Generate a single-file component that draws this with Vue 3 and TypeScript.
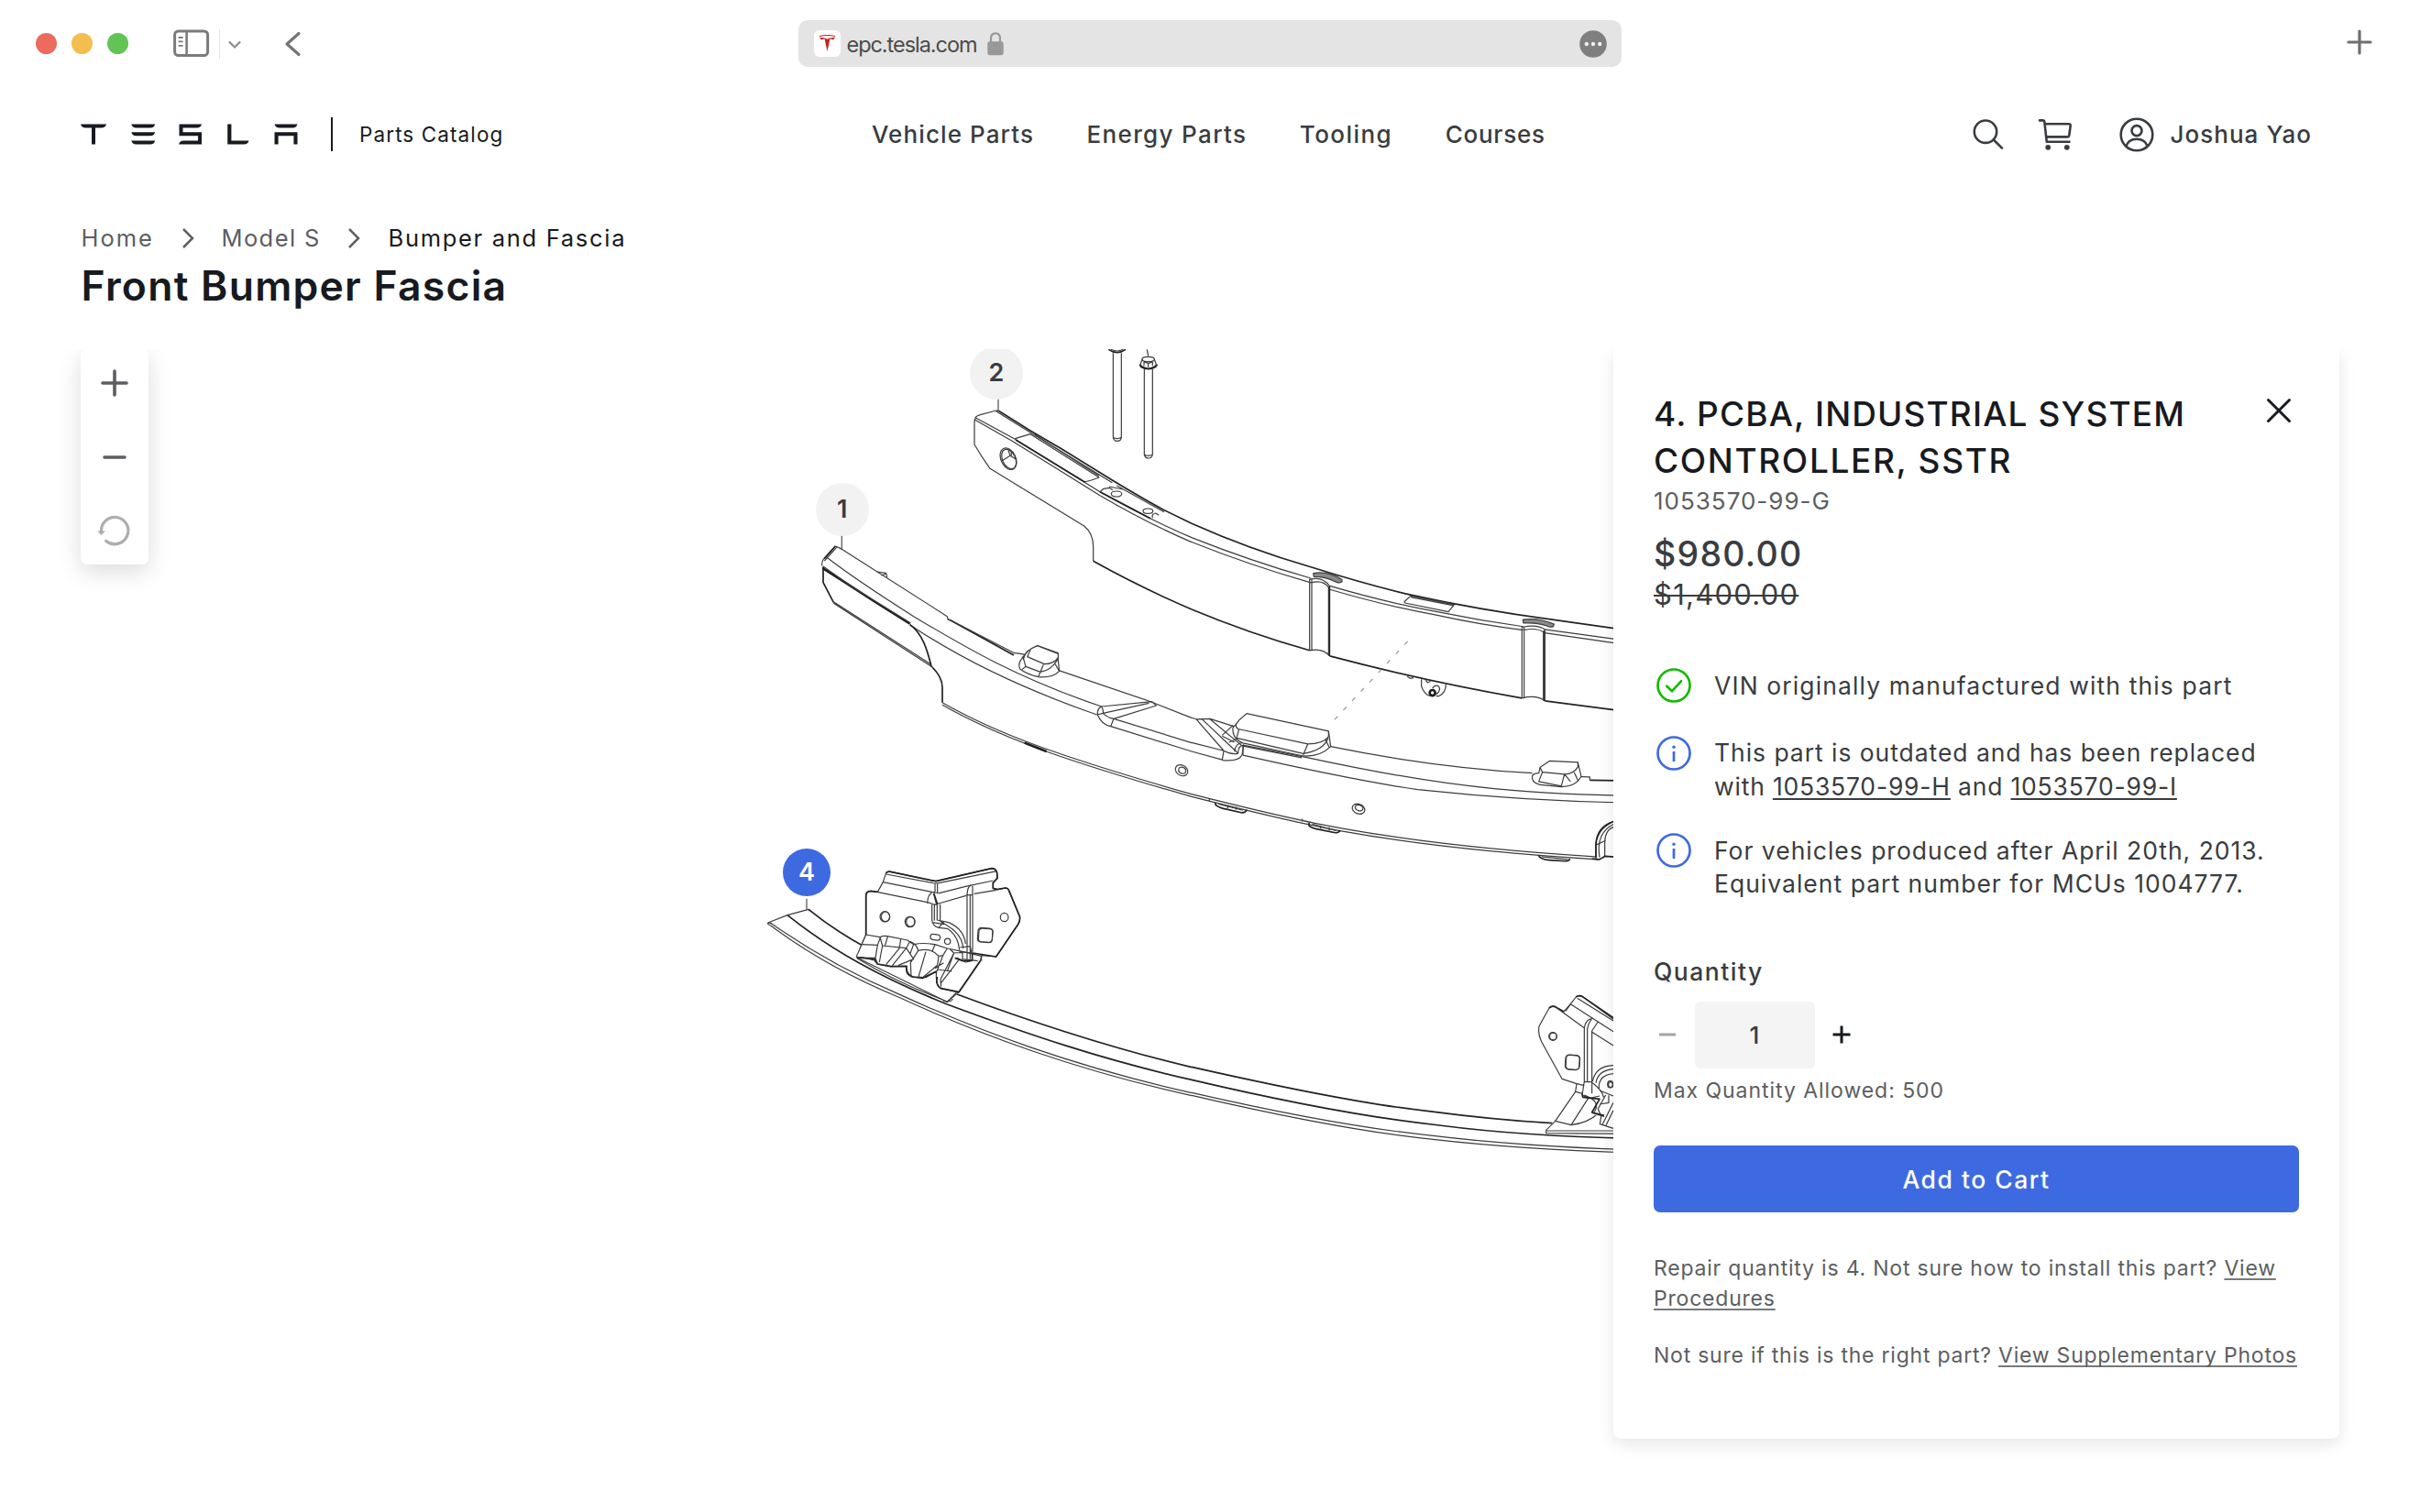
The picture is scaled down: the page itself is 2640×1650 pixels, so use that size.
<script setup lang="ts">
import { ref } from 'vue'

interface NavItem { label: string; tracking: string }
interface Pin { id: number; x: number; y: number }

const nav: NavItem[] = [
  { label: 'Vehicle Parts', tracking: '1.1px' },
  { label: 'Energy Parts', tracking: '1.35px' },
  { label: 'Tooling', tracking: '1.45px' },
  { label: 'Courses', tracking: '0.75px' },
]

// Pin centres on the diagram canvas, in canvas pixels.
const pins: Pin[] = [
  { id: 2, x: 1087, y: 26 },
  { id: 1, x: 918.7, y: 175 },
  { id: 4, x: 880, y: 570.7 },
]
const activePin = ref(4)
const quantity = ref(1)
</script>

<template>
  <div class="page">
    <div class="browser">
      <div class="lights"><i class="red"></i><i class="amber"></i><i class="green"></i></div>
      <svg class="sidebar" width="40" height="32" viewBox="0 0 40 32" fill="none" stroke="#7b7b7b">
        <rect x="1.6" y="2" width="36" height="26.6" rx="4" stroke-width="3" />
        <path d="M14.6 2V28.6" stroke-width="2.6" />
        <path d="M5.6 9H10.6M5.6 13.4H10.6M5.6 17.8H10.6" stroke-width="1.8" />
      </svg>
      <span class="rule"></span>
      <svg class="down" width="14" height="10" viewBox="0 0 14 10" fill="none" stroke="#8c8c8c" stroke-width="2.2" stroke-linecap="round" stroke-linejoin="round"><path d="M1.5 2L7 7.5L12.5 2" /></svg>
      <svg class="back" width="20" height="28" viewBox="0 0 20 28" fill="none" stroke="#757575" stroke-width="3.2" stroke-linecap="round" stroke-linejoin="round"><path d="M16 2.5L3 14L16 25.5" /></svg>
      <div class="address">
        <span class="favicon">
          <svg width="29" height="29" viewBox="0 0 29 29" fill="#c4231f">
            <path d="M14.5 23L11.6 9.6C10.2 9.7 9.2 10 8.6 10.5C7.5 10.1 6.5 8.9 6 7.6C8.4 8.3 11.8 8 14.5 9.8C17.2 8 20.6 8.3 23 7.6C22.5 8.9 21.5 10.1 20.4 10.5C19.8 10 18.8 9.7 17.4 9.6Z" />
            <path d="M5.6 6.3C10.5 4.4 18.5 4.4 23.4 6.3L23 7.1C18 5.6 11 5.6 6 7.1Z" />
          </svg>
        </span>
        <span class="url">epc.tesla.com</span>
        <svg class="lock" width="18" height="26" viewBox="0 0 18 26">
          <path d="M4 11V7Q4 1.4 9 1.4Q14 1.4 14 7V11" fill="none" stroke="#989898" stroke-width="2.2" />
          <rect x="0.3" y="10.3" width="17.4" height="15" rx="2.5" fill="#989898" />
        </svg>
        <svg class="dots" width="30" height="30" viewBox="0 0 30 30"><circle cx="15" cy="15" r="14.8" fill="#7f7f7f" /><g fill="#efefef"><circle cx="7.8" cy="15" r="2.2" /><circle cx="15" cy="15" r="2.2" /><circle cx="22.2" cy="15" r="2.2" /></g></svg>
      </div>
      <svg class="newtab" width="28" height="28" viewBox="0 0 28 28" stroke="#6e6e6e" stroke-width="3.2" stroke-linecap="round"><path d="M14 2V26M2 14H26" /></svg>
    </div>

    <header class="header">
      <div class="brand">
        <svg width="237" height="24" viewBox="0 0 237 24" fill="#171a20">
          <path d="M0 0.5H28Q27 4.5 22.5 4.5H16V22.5H12V4.5H5.5Q1 4.5 0 0.5Z" />
          <path d="M55.3 0.5H81.2Q80.2 4.5 76 4.5H60.5Q56.3 4.5 55.3 0.5ZM55.3 9.2H81.2Q80.2 13.2 76 13.2H60.5Q56.3 13.2 55.3 9.2ZM55.3 18.5H81.2Q80.2 22.5 76 22.5H60.5Q56.3 22.5 55.3 18.5Z" />
          <path d="M107.5 0.5H132Q131 4.5 126.5 4.5H111.5V9.2H132V22.5H107Q108 18.5 112.5 18.5H128V13.2H107.5Z" />
          <path d="M160.2 0.5H164.4V18.5H183.5Q182.5 22.5 178 22.5H160.2Z" />
          <path d="M211.5 0.5H236.5Q235.5 4.5 231 4.5H217Q212.5 4.5 211.5 0.5ZM211.5 9.2H236.5V22.5H232.4V13.2H215.6V22.5H211.5Z" />
        </svg>
        <span class="bar"></span>
        <span class="catalog">Parts Catalog</span>
      </div>
      <nav class="nav">
        <a v-for="n in nav" :key="n.label" :style="{ letterSpacing: n.tracking }">{{ n.label }}</a>
      </nav>
      <div class="tools">
        <svg class="search" width="34" height="34" viewBox="0 0 34 34" fill="none" stroke="#393c41" stroke-width="2.6" stroke-linecap="round"><circle cx="14" cy="13.7" r="12.2" /><path d="M22.8 22.5L32 31.7" /></svg>
        <svg class="cart" width="38" height="36" viewBox="0 0 38 36" fill="none" stroke="#393c41" stroke-width="2.6" stroke-linecap="round" stroke-linejoin="round">
          <path d="M2 2.4H5.2Q7.2 2.4 7.4 4.5L9.8 25.8H34.5M7.9 6.2H34Q35.9 6.2 35.7 8.3L34.3 18.6Q34 20.4 32.2 20.4H9.4" />
          <circle cx="11.2" cy="31.8" r="2.9" fill="#393c41" stroke="none" /><circle cx="31.8" cy="31.8" r="2.9" fill="#393c41" stroke="none" />
        </svg>
        <svg class="user" width="38" height="38" viewBox="0 0 38 38" fill="none" stroke="#393c41" stroke-width="2.6"><circle cx="19" cy="19" r="17.3" /><circle cx="19" cy="14.6" r="5.5" /><path d="M7.6 31.4C9 26.6 13.5 23.7 19 23.7C24.5 23.7 29 26.6 30.4 31.4" /></svg>
        <span class="name">Joshua Yao</span>
      </div>
    </header>

    <div class="crumbs">
      <span class="home">Home</span>
      <svg width="14" height="24" viewBox="0 0 14 24"><path d="M2 2L12 12L2 22" /></svg>
      <span class="model">Model S</span>
      <svg width="14" height="24" viewBox="0 0 14 24"><path d="M2 2L12 12L2 22" /></svg>
      <span class="current">Bumper and Fascia</span>
    </div>
    <h1 class="title">Front Bumper Fascia</h1>

    <main class="stage">
      <svg class="diagram" width="960" height="900" viewBox="820 381 960 900" fill="none">
        <!-- left half: parts 1 and 2, fixing bolts -->
        <g class="ink" transform="translate(820 370) scale(.33333)">
          <path d="M807 187V236M295 632V690" class="soft" />
          <path class="bold" d="M808 235L912 300L1010 357L1185 465Q1290 528 1350 560L1440 604" />
          <path d="M732 257Q738 250 748 248L800 234L808 235M800 236L912 306L1180 470" />
          <path d="M732 257L862 328L1140 500Q1300 590 1440 650M730 264L855 335L1140 512Q1290 600 1440 665" />
          <path d="M862 326L912 311L1137 453L1112 462L1088 468M925 312L1137 448" />
          <path class="bold" d="M864 330L1090 468M1140 500L1305 587" />
          <path d="M734 255L729 268V345Q752 385 780 424L1088 612Q1118 636 1118 680V727" />
          <path class="bold" d="M1118 727Q1270 812 1440 885" />
          <ellipse cx="840" cy="392" rx="24" ry="37" transform="rotate(-25 840 392)" />
          <ellipse cx="842" cy="393" rx="21" ry="34" transform="rotate(-25 842 393)" />
          <path d="M840 364L846 382L820 398M846 382L866 394M850 366V382" />
          <path d="M1140 500L1152 490L1170 487L1182 494M1170 483L1215 492" />
          <ellipse cx="1194" cy="507" rx="17" ry="9" /><ellipse cx="1297" cy="563" rx="16" ry="8" />
          <path d="M1312 586Q1308 572 1322 570L1333 577M1195 480L1350 566" />
          <path class="bold" d="M1168 34Q1196 54 1224 34" />
          <path d="M1176 34Q1196 44 1216 34M1183 46V322Q1186 334 1196 334Q1208 334 1210 322V46M1183 322Q1196 330 1210 322" />
          <path d="M1294 34L1298 56M1278 66L1272 84M1318 66L1324 84M1284 74L1298 80L1312 74M1298 80V92M1284 74V88M1312 74V88" />
          <ellipse cx="1298" cy="66" rx="20" ry="8" />
          <path class="bold" d="M1269 84Q1298 110 1328 84M1272 90Q1298 106 1324 90" />
          <path d="M1285 98V378Q1288 390 1298 390Q1310 390 1312 378V98M1285 378Q1298 386 1312 378" />

          <path d="M274 678L290 685L640 908L642 918L652 922M274 678L234 722Q229 732 230 742M280 680L238 726" />
          <path class="bold" d="M274 678L238 718M650 920L858 1035M234 745V797L268 862" />
          <path d="M268 860L588 1066M268 865L588 1072M642 916L860 1028L880 1030L905 1036" />
          <path d="M242 712C330 780 400 826 530 908C700 1010 870 1110 1145 1203" />
          <path d="M518 935L540 950C700 1055 900 1150 1130 1230" />
          <path class="heavy" d="M232 750L292 788L400 858L518 932" />
          <path d="M234 744L330 812L520 930" />
          <path class="bold" d="M518 935C560 965 575 1020 588 1071Q624 1105 624 1140V1190" />
          <path d="M624 1190C800 1290 1000 1365 1440 1490M624 1198C800 1298 1000 1373 1440 1498" />
          <path d="M410 762L440 766L443 780M424 774L440 768" />
          <path d="M1005 1085L1300 1185L1440 1240" />
          <path class="heavy" d="M893 1322L965 1350" />
          <g fill="#fff">
            <path d="M878 1080Q870 1062 885 1045L905 1020L935 1004L1003 1028V1052L1007 1087Q985 1110 938 1106Q900 1097 878 1080Z" />
            <path d="M935 1004L1003 1030V1042Q990 1064 958 1064L902 1040L914 1014Z" />
          </g>
          <path d="M905 1020Q892 1032 890 1048L897 1072L945 1090Q980 1085 1000 1050M945 1090L938 1106M945 1090L955 1066M1003 1048L992 1062L1007 1087M897 1072L885 1082M890 1048L885 1040" />
          <path d="M1145 1203L1310 1187L1324 1200L1185 1243Q1165 1240 1150 1225L1300 1192M1145 1203Q1130 1210 1132 1230Q1145 1262 1175 1268L1440 1350M1145 1203Q1152 1215 1150 1225L1130 1230M1185 1243L1175 1268M1185 1243L1440 1322" />
        </g>

        <!-- middle: beams up to the details panel -->
        <g class="ink" transform="translate(1280 370) scale(.33333 .38265)">
          <path class="bold" d="M60 526Q250 600 450 650Q640 702 780 730Q1000 772 1240 800L1500 832" />
          <path d="M60 566Q250 632 450 682M60 579Q250 645 450 695M512 704Q700 752 860 777Q1000 802 1145 820M512 714Q700 762 860 787Q1000 814 1145 830M1215 828L1500 862M1215 838L1500 874" />
          <path d="M446 685V888M453 685V888M508 705V900M446 685Q490 676 512 705M450 695Q490 686 508 708M446 888Q490 880 512 904M1141 822V1024M1148 822V1024M1211 832V1032M1141 822Q1190 812 1216 828M1146 830Q1190 822 1211 836M1141 1024Q1190 1014 1216 1032" />
          <path class="bold" d="M511 705V904M1215 830V1032M60 771Q250 840 446 888M512 904Q820 975 1141 1024M1216 1032L1500 1064" />
          <path fill="#8a8a8a" d="M458 668Q505 660 552 686V692Q542 698 530 692Q498 678 460 678ZM1144 800Q1196 794 1246 813L1244 819Q1234 824 1222 818Q1190 808 1146 810Z" />
          <path d="M755 750L777 732L920 757L900 778L755 752M777 736L918 760" />
          <path class="dash" d="M767 862L510 1102" />
          <path d="M812 970V990Q820 1012 840 1018M860 1018H870Q892 1008 892 985M848 996Q856 984 868 990Q878 1000 860 1014M826 972L832 980L842 976M765 962L776 968L786 966" />
          <ellipse class="heavy" cx="848" cy="1009" rx="9" ry="8" />

          <path d="M60 1080L75 1084L120 1083L200 1105M75 1084L165 1174M95 1085L210 1180M120 1084L222 1158M60 1151L165 1174M60 1176L160 1200M165 1174L160 1201M165 1174Q190 1186 212 1182M160 1201Q215 1206 225 1186L230 1158Q212 1158 212 1182M228 1152Q205 1150 200 1176" />
          <path d="M160 1130L195 1102M182 1150L216 1138M160 1132L200 1150" />
          <path fill="#fff" d="M204 1100L214 1088L240 1068L508 1118L515 1162Q480 1192 425 1189L228 1152Q192 1140 195 1108Z" />
          <path d="M508 1118V1134Q490 1155 440 1155L212 1112Q202 1106 206 1096M215 1112L207 1138L425 1182Q490 1174 507 1138M440 1155L425 1186M497 1140L510 1164M224 1160L420 1194" />
          <path d="M515 1162Q850 1222 1175 1238M228 1158L430 1192Q800 1262 1050 1282T1500 1301M228 1187Q600 1260 800 1285Q1150 1318 1500 1323M228 1158V1187" />
          <path fill="#fff" d="M1200 1222L1232 1203L1324 1207L1335 1248Q1315 1278 1270 1277L1200 1271Q1170 1265 1175 1245Q1182 1238 1196 1238Z" />
          <path d="M1324 1207V1220Q1310 1241 1280 1241L1208 1235L1200 1222M1208 1235L1196 1262L1270 1275M1280 1241L1270 1275M1280 1241L1300 1262M1312 1236L1325 1260M1335 1248L1363 1249V1258" />
          <path class="bold" d="M1363 1258L1500 1260" />
          <ellipse cx="27" cy="1230" rx="21" ry="15" transform="rotate(20 27 1230)" /><ellipse cx="29" cy="1230" rx="12" ry="9" transform="rotate(20 29 1230)" />
          <ellipse cx="606" cy="1340" rx="21" ry="14" transform="rotate(15 606 1340)" /><ellipse cx="608" cy="1337" rx="13" ry="8" transform="rotate(15 608 1337)" />
          <path d="M60 1298Q400 1373 550 1395Q900 1450 1380 1476M60 1305Q400 1380 550 1403Q900 1458 1390 1484M118 1310V1318M422 1368V1376" />
          <path class="bold" d="M138 1322V1328Q150 1338 175 1341L225 1351Q238 1350 240 1342M444 1379V1388Q455 1396 480 1399L530 1408Q542 1408 546 1401M1195 1472Q1200 1484 1230 1486L1285 1489Q1295 1488 1298 1482" />
          <path d="M148 1326L228 1344M178 1330V1338M205 1334V1342M455 1383L532 1402M482 1388V1396M510 1392V1402M1205 1476L1290 1484" />
          <path d="M1383 1480V1440Q1385 1390 1440 1376M1395 1478Q1382 1410 1440 1384M1412 1475V1440Q1412 1400 1440 1392M1383 1443L1415 1430" />
          <path class="bold" d="M1383 1480V1440Q1388 1395 1440 1376M1370 1482L1395 1484L1412 1475L1500 1480" />
        </g>

        <!-- lower left: part 4 strip -->
        <g class="ink" transform="translate(820 780) scale(.33333)">
          <path d="M180 602V636" class="soft" />
          <path d="M53 681L117 656L186 637L192 642M53 681Q51 686 62 690M53 681L66 684" />
          <path class="bold" d="M186 637Q270 705 362 755M672 915C900 1000 1150 1085 1440 1154" />
          <path class="bold" d="M117 656C260 770 420 860 640 948C900 1045 1150 1130 1440 1195" />
          <path d="M345 797Q480 880 640 938" />
          <path d="M60 680C180 765 330 850 480 914C750 1038 1050 1150 1440 1238M62 690C180 778 330 862 480 924C750 1048 1050 1160 1440 1247" />

          <path fill="#fff" d="M374 720V592Q374 578 390 577L412 580L430 548L440 518Q445 512 455 514L603 545L785 503Q800 503 803 518L804 535L790 550V568L804 572L830 567Q840 567 843 578L877 660Q880 672 872 686L800 792L752 788L748 806L678 908L640 940L345 795L360 752Z" />
          <path fill="#fff" d="M345 795Q342 788 348 780L374 720L420 728Q430 722 445 725L510 738L530 752Q560 745 600 752L640 765L690 775L752 790L748 806L678 908L620 896Q600 885 605 840L570 860L530 858Q505 850 507 822L455 824L412 816L402 804L362 794Z" />
          <path class="bold" d="M374 720V592Q374 578 390 577L412 580M440 518Q445 512 455 514L603 545L785 503Q800 503 803 518L804 535L790 550V568L804 572L830 567Q840 567 843 578L877 660Q880 672 872 686L800 792L724 780" />
          <path class="bold" d="M748 806L678 908L620 896Q600 885 608 858M345 795L402 800L412 816L455 824L507 824Q503 850 525 858L560 862L605 840" />
          <path d="M440 522L600 552L612 551L802 512M430 548L590 580L614 584L700 562L790 543M410 580L575 614L600 622L612 618L702 592M728 586L800 574M600 552V582M608 552V582" />
          <path d="M590 622V672Q592 692 612 697L640 700Q676 722 680 770M598 622V674M607 622V672L645 680Q695 702 700 750M617 620V676L640 690Q690 720 692 765M575 617Q576 590 590 582M605 622L596 586M592 680L630 686M612 697L630 676" />
          <path class="bold" d="M596 584L608 620" />
          <path d="M705 592V800M715 592V800M723 585V780M705 592Q705 565 717 557M723 588V560M702 590H722" />
          <ellipse cx="436" cy="661" rx="16" ry="17" /><ellipse cx="518" cy="678" rx="16" ry="17" /><ellipse cx="827" cy="663" rx="13" ry="14" />
          <ellipse cx="438" cy="661" rx="14" ry="16" /><ellipse cx="520" cy="678" rx="14" ry="16" />
          <rect x="740" y="698" width="48" height="47" rx="11" transform="rotate(4 764 722)" /><rect x="743" y="700" width="45" height="44" rx="10" transform="rotate(4 764 722)" />
          <rect x="585" y="719" width="32" height="18" rx="8" transform="rotate(8 600 728)" /><circle cx="641" cy="742" r="9.5" />
          <path d="M360 752L412 754M348 795L405 796M412 754L420 732M412 754L405 796L412 816M428 756L506 764M428 756L418 810M420 728L428 756M445 726L436 758M488 734L484 762M506 764L518 742M506 764L460 822M484 764L440 818M506 764L530 800L480 820M518 742Q540 750 545 772M530 752L518 784M545 772L520 812L522 856M545 772Q590 762 612 790M570 776L546 858M600 752L590 776M612 790L608 820L562 858M640 765L626 788L612 790M626 788L606 840M650 768L662 780L640 840M662 780L690 778M662 780L618 866L620 890M680 800L618 880M655 840L608 834M628 812L600 830M690 774V800L740 806M672 796L700 810L720 806M682 762L715 758L720 780L680 776" />
          <path class="bold" d="M665 796L692 806L722 804V780" />
          <path d="M672 907L640 940L626 936M636 940L654 936L658 930M752 788V806" />
        </g>

        <!-- lower right: strip end and second bracket -->
        <g class="ink" transform="translate(1280 960) scale(.33333)">
          <path class="bold" d="M60 613C400 690 650 738 830 757Q1050 786 1240 797M60 655C400 735 650 780 870 804Q1150 840 1500 847" />
          <path d="M60 697C400 775 650 818 850 838Q1130 872 1500 884M60 706C400 785 650 830 850 850Q1130 882 1500 894" />
          <path fill="#fff" d="M1320 668L1272 652L1205 530Q1192 505 1197 480L1230 420Q1238 412 1250 416L1278 432L1300 407L1318 384Q1325 377 1338 382L1500 500V832L1220 830V820L1250 790L1316 694Z" />
          <path class="bold" d="M1318 384Q1325 377 1338 382L1440 452M1230 420Q1238 412 1250 416L1278 432" />
          <path d="M1322 388L1440 462M1250 416L1345 485M1345 485V660M1355 490V660M1370 495V662M1300 407L1440 497M1368 497L1440 543M1345 485Q1350 455 1372 455M1355 490Q1358 470 1368 458M1370 495L1390 465M1284 430L1300 407" />
          <circle cx="1242" cy="513" r="13" /><circle cx="1243" cy="513" r="11.5" />
          <rect x="1283" y="574" width="47" height="48" rx="12" transform="rotate(4 1306 598)" /><rect x="1285" y="575" width="44" height="46" rx="11" transform="rotate(4 1306 598)" />
          <ellipse cx="1430" cy="670" rx="9" ry="11" /><ellipse cx="1431" cy="671" rx="7" ry="9" />
          <path d="M1372 660Q1382 610 1440 608M1383 665Q1390 624 1440 620M1393 684Q1390 640 1440 635" />
          <path d="M1316 694L1340 700M1250 790L1302 803L1360 712L1345 705M1302 803Q1360 795 1390 765M1345 660L1338 705L1360 716L1395 708M1345 662H1370V700M1372 665Q1405 690 1408 712M1395 690L1440 708M1415 705L1390 750L1400 775L1396 800L1440 814M1440 730L1405 800M1360 712Q1400 730 1375 765L1410 775M1425 706V730L1395 735M1320 668L1345 674M1440 755L1415 806M1222 822H1440" />
          <path class="bold" d="M1338 700L1340 712L1395 718L1370 762L1410 772" />
        </g>
      </svg>

      <button v-for="p in pins" :key="p.id" class="pin" :class="{ active: p.id === activePin }" :style="{ left: p.x + 'px', top: p.y + 'px' }">{{ p.id }}</button>

      <div class="zoom">
        <svg width="32" height="32" viewBox="0 0 32 32" stroke="#5c5e62" stroke-width="3.6" stroke-linecap="round"><path d="M16 3V29M3 16H29" /></svg>
        <svg width="32" height="32" viewBox="0 0 32 32" stroke="#5c5e62" stroke-width="3.6" stroke-linecap="round"><path d="M5 16H27" /></svg>
        <svg width="40" height="36" viewBox="0 0 40 36" fill="none" stroke="#adadad" stroke-width="3.2"><path d="M10.6 29.2A14.7 14.7 0 1 0 5.6 20" stroke-linecap="round" /><path d="M1 18.5H10L5.500 23Z" fill="#adadad" stroke="none" /></svg>
      </div>

      <aside class="panel">
        <div class="head">
          <h2><span class="l1">4. PCBA, INDUSTRIAL SYSTEM</span><br /><span class="l2">CONTROLLER, SSTR</span></h2>
          <svg width="28" height="28" viewBox="0 0 28 28" stroke="#171a20" stroke-width="3" stroke-linecap="round"><path d="M2.5 2.5L25.5 25.5M25.5 2.5L2.5 25.5" /></svg>
        </div>
        <div class="sku">1053570-99-G</div>
        <div class="price">$980.00</div>
        <div class="was">$1,400.00</div>

        <div class="note n1">
          <svg width="40" height="40" viewBox="0 0 40 40" fill="none" stroke="#12bb00" stroke-width="2.7" stroke-linecap="round" stroke-linejoin="round"><circle cx="20" cy="20" r="17.5" /><path d="M12.3 20.8L18 26.2L28 15.3" /></svg>
          <p class="v">VIN originally manufactured with this part</p>
        </div>
        <div class="note n2">
          <svg width="40" height="40" viewBox="0 0 40 40" fill="none" stroke="#3e6ae1" stroke-width="2.7"><circle cx="20" cy="20" r="17.5" /><path d="M20 18V29" /><circle cx="20" cy="13.3" r="1.7" fill="#3e6ae1" stroke="none" /></svg>
          <p><span class="a">This part is outdated and has been replaced</span><br /><span class="b">with <u>1053570-99-H</u> and <u>1053570-99-I</u></span></p>
        </div>
        <div class="note n3">
          <svg width="40" height="40" viewBox="0 0 40 40" fill="none" stroke="#3e6ae1" stroke-width="2.7"><circle cx="20" cy="20" r="17.5" /><path d="M20 18V29" /><circle cx="20" cy="13.3" r="1.7" fill="#3e6ae1" stroke="none" /></svg>
          <p><span class="c">For vehicles produced after April 20th, 2013.</span><br /><span class="d">Equivalent part number for MCUs 1004777.</span></p>
        </div>

        <div class="qlabel">Quantity</div>
        <div class="qty">
          <svg width="22" height="22" viewBox="0 0 22 22" stroke="#a2a3a5" stroke-width="3"><path d="M2 11H20" /></svg>
          <span class="field">{{ quantity }}</span>
          <svg width="22" height="22" viewBox="0 0 22 22" stroke="#171a20" stroke-width="3"><path d="M1.5 11H20.5M11 1.5V20.5" /></svg>
        </div>
        <div class="max">Max Quantity Allowed: 500</div>
        <button class="add">Add to Cart</button>
        <p class="help">Repair quantity is 4. Not sure how to install this part? <u>View</u><br /><u>Procedures</u></p>
        <p class="help second">Not sure if this is the right part? <u>View Supplementary Photos</u></p>
      </aside>
    </main>
  </div>
</template>

<style>
body { margin: 0; background: #fff; }
</style>

<style scoped>
* { box-sizing: border-box; }
.page {
  width: 2640px; height: 1650px; overflow: hidden; background: #fff;
  display: flex; flex-direction: column;
  font-family: Inter, "Liberation Sans", sans-serif; color: #171a20;
  white-space: nowrap;
}
svg { display: block; flex: none; }

.browser { height: 95px; flex: none; display: flex; align-items: center; padding: 0 52px 0 39px; }
.lights { display: flex; gap: 16px; }
.lights i { width: 23px; height: 23px; border-radius: 50%; }
.red { background: #ec6a5e; }
.amber { background: #f4bd4f; }
.green { background: #61c454; }
.sidebar { margin-left: 48.5px; }
.rule { width: 1.5px; height: 32px; background: #e6e6e6; margin-left: 10px; }
.down { margin-left: 9px; margin-top: 2px; }
.back { margin-left: 47px; }
.address {
  width: 898px; height: 51px; border-radius: 10px; background: #e4e4e4; margin-left: 540.5px;
  display: flex; align-items: center; padding: 0 16px 0 17px;
}
.favicon { width: 29px; height: 29px; border-radius: 6px; background: #fff; }
.url { font-size: 23.5px; line-height: 30px; letter-spacing: -1.05px; color: #4b4b4b; margin-left: 7px; margin-top: 2px; }
.lock { margin-left: 12px; }
.dots { margin-left: auto; }
.newtab { margin-left: auto; margin-top: -3px; }

.header { height: 103px; flex: none; display: grid; grid-template-columns: 951px 1fr auto; align-items: center; padding-right: 118px; }
.brand { display: flex; align-items: center; padding-left: 88px; }
.bar { width: 2.5px; height: 37px; background: #171a20; margin-left: 35.5px; }
.catalog { font-size: 22.5px; line-height: 30px; letter-spacing: 1.1px; margin-left: 29px; }
.nav { display: flex; gap: 57.5px; }
.nav a { font-size: 26px; line-height: 34px; font-weight: 500; color: #393c41; }
.tools { display: flex; align-items: center; color: #393c41; }
.cart { margin-left: 37px; }
.user { margin-left: 50.5px; }
.name { font-size: 26px; line-height: 34px; font-weight: 500; letter-spacing: 1.05px; margin-left: 17.5px; }

.crumbs { display: flex; align-items: center; height: 36px; flex: none; margin-top: 44px; padding-left: 88.5px; font-size: 25.5px; line-height: 36px; color: #5c5e62; }
.crumbs svg { fill: none; stroke: #5c5e62; stroke-width: 2.5; }
.home { letter-spacing: 2px; width: 109.5px; }
.model { letter-spacing: 1.4px; margin-left: 29.5px; width: 137px; }
.current { letter-spacing: 1.7px; margin-left: 31px; color: #171a20; }
.title { margin: 6px 0 0; padding-left: 88.5px; font-size: 44.5px; line-height: 56px; height: 56px; flex: none; font-weight: 600; letter-spacing: 1.25px; }

.stage { position: relative; flex: 1; margin-top: 41px; overflow: hidden; display: flex; align-items: flex-start; padding: 0 88px; }
.diagram { position: absolute; left: 820px; top: 0; }
.ink path, .ink ellipse, .ink circle, .ink rect { stroke: #3c3c3c; stroke-width: 1.2; vector-effect: non-scaling-stroke; stroke-linejoin: round; }
.ink .bold { stroke: #222; stroke-width: 1.7; }
.ink .heavy { stroke: #1c1c1c; stroke-width: 2.6; }
.ink .soft { stroke: #666; stroke-width: 1.4; }
.ink .dash { stroke: #999; stroke-dasharray: 5 9; }

.pin {
  position: absolute; width: 58px; height: 58px; margin: -29px 0 0 -29px; padding: 0; border: 0; border-radius: 50%;
  background: #f2f2f2; color: #393c41; font: 600 27px/58px Inter, sans-serif; text-align: center;
}
.pin.active { width: 52px; height: 52px; margin: -26px 0 0 -26px; line-height: 52px; background: #3e6ae1; color: #fff; }

.zoom {
  width: 74px; height: 235px; border-radius: 7px; background: #fff;
  box-shadow: 0 8px 26px rgba(0, 0, 0, .14);
  display: flex; flex-direction: column; align-items: center; padding-top: 21px;
}
.zoom svg + svg { margin-top: 48.5px; }
.zoom svg:last-child { margin-top: 46px; }

.panel {
  position: relative; width: 792px; height: 1188.5px; margin-left: auto; padding: 45px 44px 0 44px;
  background: #fff; border-radius: 0 0 8px 8px; box-shadow: 0 6px 18px rgba(0, 0, 0, .1);
}
.head { display: flex; justify-content: space-between; align-items: flex-start; }
.head svg { margin: 7.5px 8px 0 0; }
h2 { margin: 0; font-size: 37px; line-height: 51.3px; font-weight: 500; }
.l1 { letter-spacing: 1.12px; }
.l2 { letter-spacing: 1.65px; }
.sku { font-size: 26px; line-height: 36px; letter-spacing: 1px; color: #5c5e62; }
.price { margin-top: 16px; font-size: 37.5px; line-height: 48px; letter-spacing: 1.3px; font-weight: 500; color: #393c41; }
.was { font-size: 31px; line-height: 40px; letter-spacing: 1.25px; color: #393c41; text-decoration: line-through; text-decoration-thickness: 2px; width: max-content; }
.note { display: flex; align-items: flex-start; }
.note svg { margin: -1.5px 0 0 2px; }
.note p { margin: 0 0 0 24px; font-size: 26.5px; line-height: 36.5px; color: #393c41; }
.n1 { margin-top: 61px; }
.n2 { margin-top: 35px; }
.n3 { margin-top: 33.5px; }
.v { letter-spacing: 1.12px; }
.a { letter-spacing: .95px; }
.b { letter-spacing: .8px; }
.c { letter-spacing: .99px; }
.d { letter-spacing: 1.01px; }
u { text-decoration-thickness: 2px; text-underline-offset: 3px; text-decoration-skip-ink: none; }
.qlabel { margin-top: 59px; font-size: 26.5px; line-height: 36px; font-weight: 500; letter-spacing: 1.5px; color: #393c41; }
.qty { margin-top: 15px; height: 73.5px; display: flex; align-items: center; }
.qty svg:first-child { margin-left: 3.5px; }
.field { width: 131px; height: 73.5px; margin: 0 18.5px 0 19px; border-radius: 6px; background: #f4f4f4; text-align: center; font-size: 26px; line-height: 74px; font-weight: 500; color: #393c41; }
.max { margin-top: 8px; font-size: 23px; line-height: 32px; letter-spacing: .95px; color: #5c5e62; }
.add { display: block; width: 704px; height: 73.5px; margin: 43.5px 0 0; padding: 0; border: 0; border-radius: 7px; background: #3e6ae1; color: #fff; font: 500 26.5px/74px Inter, sans-serif; letter-spacing: 1.5px; }
.help { margin: 44.5px 0 0; font-size: 23px; line-height: 33px; letter-spacing: .79px; color: #5c5e62; }
.help u { text-decoration-thickness: 1.5px; text-decoration-color: #77797c; }
.help.second { margin-top: 29.5px; letter-spacing: .77px; }
</style>
